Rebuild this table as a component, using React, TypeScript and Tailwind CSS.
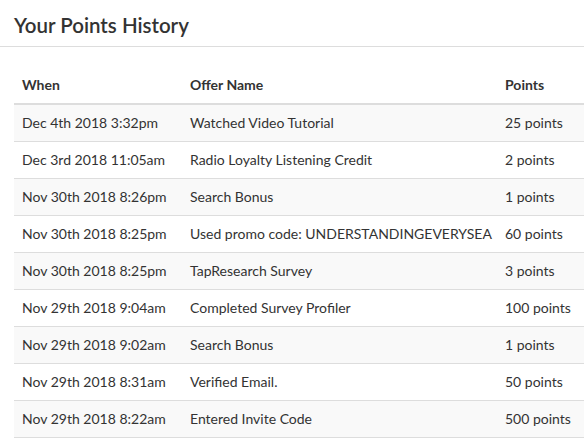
const rows = [
  { when: "Dec 4th 2018 3:32pm", offer: "Watched Video Tutorial", points: "25 points" },
  { when: "Dec 3rd 2018 11:05am", offer: "Radio Loyalty Listening Credit", points: "2 points" },
  { when: "Nov 30th 2018 8:26pm", offer: "Search Bonus", points: "1 points" },
  { when: "Nov 30th 2018 8:25pm", offer: "Used promo code: UNDERSTANDINGEVERYSEA", points: "60 points" },
  { when: "Nov 30th 2018 8:25pm", offer: "TapResearch Survey", points: "3 points" },
  { when: "Nov 29th 2018 9:04am", offer: "Completed Survey Profiler", points: "100 points" },
  { when: "Nov 29th 2018 9:02am", offer: "Search Bonus", points: "1 points" },
  { when: "Nov 29th 2018 8:31am", offer: "Verified Email.", points: "50 points" },
  { when: "Nov 29th 2018 8:22am", offer: "Entered Invite Code", points: "500 points" },
];

export default function App() {
  return (
    <div className="h-[441px] w-[584px] overflow-hidden bg-white font-['Lato',sans-serif] text-[#333]">
      <h2 className="border-b border-[#ddd] px-[14px] pb-[8px] pt-[13px] text-[20.5px] leading-[25px] font-semibold">
        Your Points History
      </h2>

      <div className="mt-[20px] pl-[14px]">
        <table className="w-[600px] table-fixed border-separate border-spacing-0 text-[14px] leading-[20px]">
          <colgroup>
            <col className="w-[168px]" />
            <col className="w-[315px]" />
            <col />
          </colgroup>
          <thead>
            <tr>
              <th className="border-b-2 border-[#ddd] p-2 text-left font-bold">When</th>
              <th className="border-b-2 border-[#ddd] p-2 text-left font-bold">Offer Name</th>
              <th className="border-b-2 border-[#ddd] p-2 text-left font-bold">Points</th>
            </tr>
          </thead>
          <tbody>
            {rows.map((row, i) => (
              <tr key={i} className={i % 2 === 0 ? "bg-[#f9f9f9]" : "bg-white"}>
                <td className="whitespace-nowrap border-b border-[#ddd] p-2">{row.when}</td>
                <td className="overflow-hidden whitespace-nowrap border-b border-[#ddd] p-2">{row.offer}</td>
                <td className="whitespace-nowrap border-b border-[#ddd] p-2">{row.points}</td>
              </tr>
            ))}
          </tbody>
        </table>
      </div>
    </div>
  );
}
